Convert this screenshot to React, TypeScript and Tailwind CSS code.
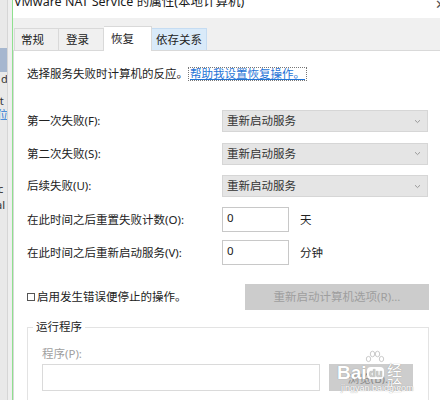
import React from "react";

const font = { fontFamily: '"Noto Sans", "Noto Sans CJK SC", sans-serif' };
const lib = { fontFamily: '"Liberation Sans", sans-serif' };

function Chevron() {
  return (
    <svg width="7" height="5" viewBox="0 0 7 5" className="shrink-0">
      <path d="M1 1.2 L3.5 3.6 L6 1.2" fill="none" stroke="#9a9a9a" strokeWidth="1" />
    </svg>
  );
}

function Select() {
  return (
    <div className="w-[206px] h-[22px] bg-[#e5e5e5] border border-[#d6d6d6] flex items-center justify-between pl-[4px] pr-[6px] text-[#333]">
      <span>重新启动服务</span>
      <Chevron />
    </div>
  );
}

function SelectRow({ label }: { label: string }) {
  return (
    <div className="flex items-center h-[22px]">
      <div className="w-[195px]">{label}</div>
      <Select />
    </div>
  );
}

function InputRow({ label, unit }: { label: string; unit: string }) {
  return (
    <div className="flex items-center h-[25px]">
      <div className="w-[195px]">{label}</div>
      <div className="w-[67px] h-[25px] bg-white border border-[#c8c8c8] pl-[4px] pt-[2px] leading-[16px] text-[#222]">0</div>
      <div className="ml-[11px]">{unit}</div>
    </div>
  );
}

function Paw() {
  return (
    <svg width="20" height="14" viewBox="0 0 20 14">
      <g fill="#ffffff" stroke="#bdbdbd" strokeWidth="0.8">
        <ellipse cx="3.5" cy="9" rx="2.2" ry="2.6" />
        <ellipse cx="7.5" cy="4" rx="2.2" ry="2.8" />
        <ellipse cx="12.5" cy="4" rx="2.2" ry="2.8" />
        <ellipse cx="16.5" cy="9" rx="2.2" ry="2.6" />
      </g>
    </svg>
  );
}

export default function App() {
  return (
    <div className="w-[440px] h-[400px] overflow-hidden flex bg-[#f0f0f0] text-[11.5px] text-[#222]" style={font}>
      {/* sliver of window behind */}
      <div className="w-[12px] h-full flex shrink-0">
        <div className="w-[7px] h-full bg-[#e9e9e9] flex flex-col overflow-hidden text-[11px] leading-[14px] text-[#333]">
          <div className="h-[48px]" />
          <div className="h-[24px] bg-[#a6b7cf]" />
          <div className="h-[22px] pl-px">d</div>
          <div className="h-[14px] whitespace-nowrap -ml-[3px]">it</div>
          <div className="h-[14px] whitespace-nowrap -ml-[3px] text-[#2a7bd4]">位</div>
          <div className="h-[60px]" />
          <div className="h-[16px] whitespace-nowrap -ml-[2px]">c</div>
          <div className="h-[16px] whitespace-nowrap -ml-[4px]">al</div>
        </div>
        <div className="w-px h-full bg-[#d6d6d6]" />
        <div className="w-[4px] h-full bg-[#efefef]" />
      </div>
      <div className="w-px h-full bg-[#8fe08f] shrink-0" />

      {/* dialog */}
      <div className="flex-1 flex flex-col min-w-0">
        <div className="h-[18px] bg-white overflow-hidden relative shrink-0">
          <div className="text-[12.5px] leading-[16px] -mt-[6px] pl-px text-[#1a1a1a] whitespace-nowrap">
            VMware NAT Service 的属性(本地计算机)
          </div>
          <div className="absolute right-[-6px] top-[-5px] text-[13px] text-[#555]">✕</div>
        </div>

        <div className="flex items-end h-[32px] pl-px shrink-0">
          <div className="h-[22px] w-[45px] border border-b-0 border-[#d9d9d9] bg-[#f0f0f0] flex items-center pl-[6px]">常规</div>
          <div className="h-[22px] w-[45px] border border-b-0 border-l-0 border-[#d9d9d9] bg-[#f0f0f0] flex items-center pl-[7px]">登录</div>
          <div className="h-[25px] w-[48px] border border-b-0 border-l-0 border-[#d9d9d9] bg-white flex items-start pt-[3px] pl-[7px] -mb-px relative z-10">恢复</div>
          <div className="h-[22px] w-[55px] border border-b-0 border-l-0 border-[#c5dcf2] bg-[#d9eaf9] flex items-center pl-[4px]">依存关系</div>
        </div>

        <div className="flex-1 bg-white border-l border-t border-[#d9d9d9] pl-[13px] pr-[11px] flex flex-col">
          <div className="flex items-center mt-[15px] h-[16px]">
            <span>选择服务失败时计算机的反应。</span>
            <span className="border border-dotted border-[#777] leading-[12px] px-px text-[#1f73d6] underline underline-offset-[1px]">帮助我设置恢复操作。</span>
          </div>

          <div className="mt-[28px] flex flex-col gap-[10.5px]">
            <SelectRow label="第一次失败(F):" />
            <SelectRow label="第二次失败(S):" />
            <SelectRow label="后续失败(U):" />
          </div>

          <div className="mt-[10px] flex flex-col gap-[8px]">
            <InputRow label="在此时间之后重置失败计数(O):" unit="天" />
            <InputRow label="在此时间之后重新启动服务(V):" unit="分钟" />
          </div>

          <div className="mt-[19px] flex items-center h-[26px]">
            <div className="flex items-center flex-1">
              <div className="w-[8px] h-[8px] border border-[#555] mr-[2px]" />
              <span>启用发生错误便停止的操作。</span>
            </div>
            <div className="w-[184px] h-[26px] bg-[#cccccc] flex items-center justify-center text-[#9e9e9e]">
              重新启动计算机选项(R)...
            </div>
          </div>

          <div className="mt-[17px] relative border border-b-0 border-[#e3e3e3] h-[80px] pl-[14px] pr-[13px]">
            <div className="absolute left-[5px] top-[-9px] bg-white px-[3px] leading-[16px]">运行程序</div>
            <div className="mt-[18px] text-[#a0a0a0] leading-[16px]">程序(P):</div>
            <div className="mt-[2px] flex gap-[9px]">
              <div className="w-[278px] h-[27px] bg-white border border-[#dadada]" />
              <div className="relative w-[84px] h-[27px] bg-[#cdcdcd] flex items-end justify-center pb-[4px] text-[#8a8a8a]">
                浏览(B)...
                {/* Baidu watermark */}
                <div className="absolute left-[8px] top-[-14px] w-[78px] h-[44px] pointer-events-none [text-shadow:0_0_1px_#8a8a8a]">
                  <div className="absolute left-[0px] top-[13px] text-[19px] font-bold text-white leading-none" style={lib}>Bai</div>
                  <div className="absolute left-[28px] top-[0px]"><Paw /></div>
                  <div className="absolute left-[30px] top-[17px] text-[11px] font-bold text-[#cdcdcd] bg-white rounded-[4px] px-[2px] leading-[12px]" style={lib}>du</div>
                  <div className="absolute left-[50px] top-[13px] text-[15px] text-white leading-none">经验</div>
                  <div className="absolute left-[4px] top-[34px] text-[9px] text-white leading-none whitespace-nowrap" style={lib}>jingyan.baidu.com</div>
                </div>
              </div>
            </div>
          </div>
        </div>
      </div>
    </div>
  );
}
